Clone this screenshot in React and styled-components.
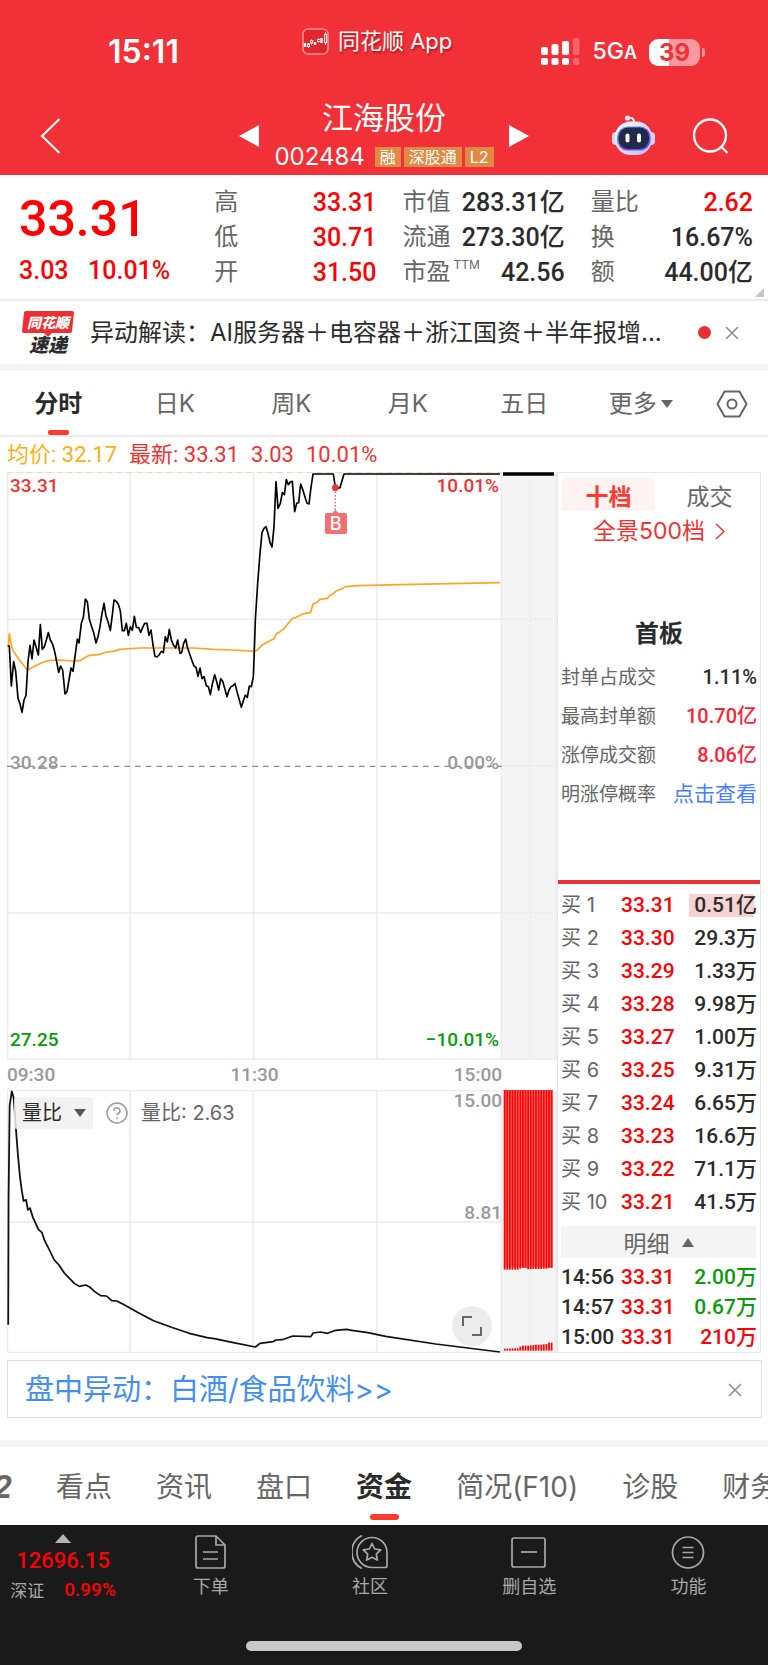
import React from "react";
import styled, { createGlobalStyle } from "styled-components";

const CJK = '"Noto Sans CJK SC", sans-serif';
const UI = `Inter, ${CJK}`;
const NUM = `Roboto, ${CJK}`;

const c = {
  brand: "#f23038",
  up: "#ff0000",
  rise: "#ee3333",
  down: "#0a9a0a",
  ink: "#2b2b2b",
  mid: "#666666",
  soft: "#999999",
  line: "#ebebeb",
  band: "#f4f4f4",
};

const Global = createGlobalStyle`
  *, *::before, *::after { box-sizing: border-box; }
  body { margin: 0; background: #fff; font-family: ${CJK}; color: ${c.ink}; }
  button { border: 0; padding: 0; margin: 0; background: none; font: inherit; color: inherit; cursor: pointer; }
  a { color: inherit; text-decoration: none; }
  h1, h2, dl, dd, dt, p { margin: 0; font-weight: inherit; font-size: inherit; }
  table { border-collapse: separate; border-spacing: 0; }
  td, th { padding: 0; font-weight: inherit; text-align: left; }
  svg { display: block; }
`;

const Page = styled.main`
  width: 100%;
  overflow: hidden;
  background: #fff;
`;

/* ---------- header ---------- */
const Header = styled.header`
  background: ${c.brand};
  color: #fff;
`;
const StatusBar = styled.div`
  display: grid;
  grid-template-columns: 194px auto 1fr;
  align-items: center;
  height: 96px;
  padding: 8px 64px 0 108px;
`;
const Clock = styled.time`
  font: 600 32px/32px ${UI};
`;
const AppName = styled.div`
  display: flex;
  align-items: center;
  gap: 9px;
  padding-bottom: 22px;
  font: 400 22px/28px ${UI};
  text-shadow: 1px 2px 2px rgba(120, 0, 0, 0.5);
  white-space: nowrap;
`;
const StatusRight = styled.div`
  display: flex;
  align-items: center;
  justify-content: flex-end;
  gap: 12px;
`;
const Network = styled.span`
  font: 500 23px/28px ${UI};
  small { font-size: 18px; font-weight: 600; }
`;
const Battery = styled.span`
  position: relative;
  width: 51px;
  margin-right: 4px;
  border-radius: 9px;
  background: linear-gradient(90deg, #fff 39%, #f9999d 39%);
  color: ${c.brand};
  font: 700 24px/27px ${UI};
  text-align: center;
  &::after {
    content: "";
    position: absolute;
    right: -5px;
    top: 9px;
    width: 3px;
    height: 9px;
    border-radius: 0 3px 3px 0;
    background: #f9999d;
  }
`;
const NavBar = styled.nav`
  display: grid;
  grid-template-columns: 1fr 290px 1fr;
  align-items: center;
  height: 79px;
  padding: 0 39px 2px 39px;
`;
const IconButton = styled.button`
  display: inline-flex;
  align-items: center;
`;
const Switcher = styled.div`
  display: flex;
  align-items: center;
  justify-content: space-between;
`;
const Stock = styled.div`
  display: flex;
  flex-direction: column;
  align-items: center;
  gap: 10px;
  padding-bottom: 8px;
`;
const StockName = styled.h1`
  font: 400 31px/40px ${CJK};
`;
const StockMeta = styled.div`
  display: flex;
  align-items: center;
  gap: 3px;
  font: 400 24px/22px ${UI};
`;
const Code = styled.span`
  margin-right: 7px;
`;
const Tag = styled.span`
  padding: 0 5px;
  background: #e08b45;
  font: 400 16px/20px ${UI};
`;
const NavActions = styled.div`
  display: flex;
  align-items: center;
  justify-content: flex-end;
  gap: 37px;
`;

/* ---------- quote ---------- */
const Quote = styled.section`
  position: relative;
  display: grid;
  grid-template-columns: minmax(0, 169fr) repeat(3, minmax(0, 162fr));
  column-gap: 26px;
  padding: 10px 15px 9px 19px;
  border-bottom: 2px solid ${c.line};
`;
const PriceBlock = styled.div`
  display: flex;
  flex-direction: column;
  color: ${c.up};
`;
const LastPrice = styled.strong`
  font: 500 50px/68px ${NUM};
`;
const Change = styled.div`
  display: flex;
  justify-content: space-between;
  padding-right: 18px;
  font: 500 25px/36px ${NUM};
`;
const Facts = styled.dl`
  display: grid;
  grid-auto-rows: 35px;
`;
const Fact = styled.div`
  display: flex;
  justify-content: space-between;
  white-space: nowrap;
  dt { color: ${c.mid}; font: 400 24px/35px ${NUM}; }
  dd { font: 500 25px/35px ${NUM}; color: ${(p) => (p.$up ? c.up : c.ink)}; }
  sup { position: absolute; margin-left: 3px; font: 400 12px/20px ${UI}; }
`;
const Corner = styled.span`
  position: absolute;
  right: 4px;
  bottom: 2px;
  border-left: 9px solid transparent;
  border-bottom: 9px solid #c4c4c4;
`;

/* ---------- news ---------- */
const News = styled.section`
  display: flex;
  align-items: center;
  height: 63px;
  padding: 0 29px 0 22px;
`;
const Logo = styled.span`
  display: flex;
  flex-direction: column;
  width: 52px;
  margin-right: 16px;
  text-align: center;
  font-style: italic;
  font-weight: 900;
`;
const LogoTop = styled.span`
  position: relative;
  z-index: 0;
  color: #fff;
  font-size: 14px;
  line-height: 22px;
  &::before {
    content: "";
    position: absolute;
    z-index: -1;
    inset: 0 1px;
    border-radius: 2px;
    background: #ea3033;
    transform: skewX(-6deg);
  }
  &::after {
    content: "";
    position: absolute;
    left: 22px;
    bottom: -4px;
    border: 4px solid transparent;
    border-bottom: 0;
    border-top-color: #ea3033;
  }
`;
const LogoBottom = styled.span`
  font-size: 19px;
  line-height: 22px;
`;
const NewsText = styled.a`
  flex: 1;
  font: 400 24px/36px ${UI};
  white-space: nowrap;
`;
const Dot = styled.span`
  width: 13px;
  height: 13px;
  margin-right: 14px;
  border-radius: 50%;
  background: #ea3033;
`;
const Band = styled.div`
  height: 7px;
  background: ${c.band};
`;

/* ---------- period tabs ---------- */
const Periods = styled.nav`
  display: grid;
  grid-template-columns: repeat(6, minmax(0, 1fr)) 69px;
  height: 66px;
  border-bottom: 2px solid ${c.line};
`;
const Period = styled.button`
  position: relative;
  display: flex;
  align-items: center;
  justify-content: center;
  gap: 4px;
  padding-top: 2px;
  font: ${(p) => (p.$active ? 700 : 400)} 24px/36px ${UI};
  color: ${(p) => (p.$active ? c.ink : c.mid)};
  &::after {
    content: "";
    display: ${(p) => (p.$active ? "block" : "none")};
    position: absolute;
    bottom: 0;
    left: calc(50% - 10px);
    width: 21px;
    height: 5px;
    border-radius: 2px;
    background: #ff3b30;
  }
`;
const Settings = styled(IconButton)`
  justify-content: flex-start;
  padding: 2px 0 0 17px;
`;
const Triangle = styled.span`
  border-style: solid;
  border-color: transparent;
  border-width: ${(p) => (p.$up ? "0" : p.$tall + "px")} ${(p) => p.$size}px ${(p) => (p.$up ? p.$tall + "px" : "0")};
  border-top-color: ${(p) => (p.$up ? "transparent" : p.$color)};
  border-bottom-color: ${(p) => (p.$up ? p.$color : "transparent")};
`;
const Readout = styled.div`
  display: flex;
  gap: 12px;
  padding: 0 7px;
  font: 400 22px/35px ${NUM};
  color: ${c.rise};
`;
const Average = styled.span`
  color: #fbb015;
`;

/* ---------- charts ---------- */
const Board = styled.section`
  display: grid;
  grid-template-columns: minmax(0, 550fr) minmax(0, 204fr);
  padding: 0 7px;
`;
const ChartColumn = styled.div`
  display: flex;
  flex-direction: column;
`;
const ChartRow = styled.div`
  display: grid;
  grid-template-columns: minmax(0, 9fr) minmax(0, 1fr);
  grid-template-rows: 100%;
  height: ${(p) => p.$height}px;
`;
const Plot = styled.div`
  position: relative;
  > svg { width: 100%; height: 100%; }
`;
const Aux = styled(Plot)`
  background: ${c.band};
`;
const ScaleLabel = styled.span`
  position: absolute;
  ${(p) => p.$side}: ${(p) => p.$inset}px;
  top: ${(p) => p.$top};
  font: 500 19px/24px ${NUM};
  color: ${(p) => p.$color};
`;
const Marker = styled.span`
  position: absolute;
  left: calc(66% - 9px);
  top: 41px;
  width: 22px;
  border-radius: 2px;
  background: #f27074;
  color: #fff;
  text-align: center;
  font: 500 18px/21px ${UI};
`;
const Times = styled.div`
  display: flex;
  justify-content: space-between;
  width: 90%;
  font: 500 19px/30px ${NUM};
  color: ${c.soft};
`;
const Indicator = styled.div`
  position: absolute;
  left: 7px;
  top: 7px;
  display: flex;
  align-items: center;
  font: 400 20px/32px ${UI};
  color: ${c.mid};
`;
const IndicatorPick = styled.button`
  display: flex;
  align-items: center;
  gap: 12px;
  height: 32px;
  padding: 0 7px 0 8px;
  margin-right: 13px;
  border-radius: 3px;
  background: rgba(240, 240, 240, 0.85);
  color: ${c.ink};
`;
const Help = styled(IconButton)`
  margin-right: 13px;
`;
const Expand = styled.button`
  position: absolute;
  right: 10px;
  bottom: 7px;
  display: flex;
  align-items: center;
  justify-content: center;
  width: 40px;
  height: 40px;
  border-radius: 50%;
  background: #ececec;
`;

/* ---------- order book ---------- */
const Book = styled.aside`
  display: flex;
  flex-direction: column;
  border: 1px solid #e6e6e6;
`;
const BookTabs = styled.div`
  display: grid;
  grid-template-columns: 1fr 1fr;
  gap: 8px;
  padding: 5px 4px 0;
`;
const BookTab = styled.button`
  height: 33px;
  border-radius: 4px;
  background: ${(p) => (p.$active ? "#fff2f2" : "none")};
  color: ${(p) => (p.$active ? "#ff3b30" : c.mid)};
  font: ${(p) => (p.$active ? 700 : 400)} 23px/32px ${CJK};
`;
const Panorama = styled.a`
  display: flex;
  align-items: center;
  justify-content: center;
  gap: 10px;
  font: 400 23px/40px ${UI};
  color: ${c.rise};
`;
const BoardTitle = styled.h2`
  padding-top: 63px;
  text-align: center;
  font: 600 24px/36px ${CJK};
`;
const Stats = styled.dl`
  display: grid;
  grid-auto-rows: 39px;
  padding: 8px 3px 0;
  margin-bottom: 66px;
`;
const Stat = styled.div`
  display: flex;
  justify-content: space-between;
  white-space: nowrap;
  dt { color: ${c.mid}; font: 400 19px/39px ${NUM}; }
  dd { font: 500 20px/39px ${NUM}; color: ${(p) => p.$color || c.ink}; }
  a { font-size: 21px; font-weight: 400; }
`;
const Bids = styled.table`
  width: 100%;
  border-top: 4px solid #ea3033;
  padding-top: 5px;
  margin-bottom: 7px;
  font: 500 21px/33px ${NUM};
`;
const Deals = styled.table`
  width: 100%;
  margin-top: 4px;
  font: 500 21px/30px ${NUM};
`;
const Level = styled.th`
  width: 63px;
  padding-left: 3px;
  color: ${(p) => (p.$dark ? c.ink : c.mid)};
  font-family: ${(p) => (p.$dark ? NUM : UI)};
  font-size: ${(p) => (p.$dark ? 21 : 20)}px;
  font-weight: ${(p) => (p.$dark ? 500 : 400)};
  white-space: nowrap;
`;
const Price = styled.td`
  color: ${c.up};
`;
const Volume = styled.td`
  padding-right: 3px;
  text-align: right;
  color: ${(p) => p.$color || c.ink};
`;
const Highlight = styled.span`
  display: inline-block;
  padding-left: 5px;
  line-height: 23px;
  background: linear-gradient(90deg, #f8d3d3 calc(100% - 3px), transparent 0);
`;
const DetailToggle = styled.button`
  display: flex;
  align-items: center;
  justify-content: center;
  gap: 12px;
  height: 32px;
  margin: 0 4px 0 3px;
  background: ${c.band};
  color: ${c.mid};
  font: 400 23px/32px ${CJK};
`;

/* ---------- lower area ---------- */
const Alert = styled.section`
  display: flex;
  align-items: center;
  justify-content: space-between;
  height: 58px;
  margin: 7px 6px 22px 7px;
  padding: 2px 19px 0 17px;
  border: 1px solid #dedede;
  a { color: #438ff0; font: 400 29px/40px ${UI}; }
`;
const Sections = styled.nav`
  display: flex;
  gap: 44px;
  height: 78px;
  margin-left: -25px;
  padding-top: 20px;
  white-space: nowrap;
`;
const SectionTab = styled.button`
  position: relative;
  flex: none;
  align-self: flex-start;
  height: 53px;
  padding-bottom: 13px;
  font: ${(p) => (p.$active ? 600 : 400)} 28px/40px ${UI};
  color: ${(p) => (p.$active ? c.ink : c.mid)};
  &::after {
    content: "";
    display: ${(p) => (p.$active ? "block" : "none")};
    position: absolute;
    bottom: 0;
    left: calc(50% - 14px);
    width: 29px;
    height: 6px;
    border-radius: 3px;
    background: #ff3b30;
  }
`;
const LevelTwo = styled(SectionTab)`
  font: italic 700 31px/40px ${UI};
`;
const Footer = styled.footer`
  background: #1a1a1a;
  color: #a8a8a8;
`;
const Actions = styled.nav`
  display: grid;
  grid-template-columns: minmax(0, 131fr) repeat(4, minmax(0, 159fr));
  height: 116px;
`;
const IndexButton = styled.button`
  display: flex;
  flex-direction: column;
  align-items: center;
  padding: 9px 5px 0 0;
`;
const IndexValue = styled.span`
  color: ${c.up};
  font: 500 22px/36px ${NUM};
`;
const IndexRow = styled.span`
  display: flex;
  gap: 20px;
  font: 400 17px/22px ${CJK};
  b { color: ${c.up}; font: 500 19px/22px ${NUM}; }
`;
const Action = styled.button`
  display: flex;
  flex-direction: column;
  align-items: center;
  gap: 3px;
  padding-top: 10px;
  font: 400 18px/26px ${CJK};
`;
const HomeBar = styled.div`
  width: 276px;
  height: 10px;
  margin: 0 auto;
  border-radius: 5px;
  background: #c8c8c8;
`;
const HomeArea = styled.div`
  height: 24px;
`;

/* ---------- drawings ---------- */
const Cross = () => (
  <svg width="14" height="14" viewBox="0 0 14 14" stroke="#8f8f8f" strokeWidth="1.6">
    <path d="M1 1L13 13M13 1L1 13" />
  </svg>
);

const AppIcon = () => (
  <svg width="27" height="27" viewBox="0 0 27 27">
    <rect x="1" y="1" width="25" height="25" rx="5" fill="#e2262d" stroke="#f58d91" strokeWidth="1.6" />
    <g fill="#fff" stroke="#fff" strokeWidth="1">
      <path d="M3 15v4M13 14v3M19.5 10v5" strokeWidth="2.4" />
      <path d="M6.500 15v5M9.500 11.500v5M16.500 10.500v4M23.500 4v13" />
      <rect x="5.500" y="16" width="2" height="2.500" fill="#e2262d" />
      <rect x="8.700" y="12.500" width="2" height="2.500" fill="#e2262d" />
      <rect x="15.600" y="11.500" width="2" height="2" fill="#e2262d" />
      <rect x="22.600" y="6.500" width="2" height="8" fill="#e2262d" />
    </g>
  </svg>
);

const Signal = () => (
  <svg width="39" height="28" viewBox="0 0 39 28" fill="#fff">
    <rect x="0" y="9" width="7" height="8" rx="2" />
    <rect x="10.500" y="6" width="7" height="11" rx="2" />
    <rect x="21" y="3" width="7" height="14" rx="2" />
    <rect x="0" y="20" width="7" height="7" rx="2" />
    <rect x="10.500" y="20" width="7" height="7" rx="2" />
    <rect x="21" y="20" width="7" height="7" rx="2" />
    <g opacity="0.25">
      <rect x="32" y="0" width="6.500" height="17" rx="2" />
      <rect x="32" y="20" width="6.500" height="7" rx="2" />
    </g>
  </svg>
);

const Robot = () => (
  <svg width="43" height="42" viewBox="0 0 43 42">
    <defs>
      <linearGradient id="shell" x1="0" y1="0" x2="1" y2="1">
        <stop offset="0" stopColor="#fff" />
        <stop offset="1" stopColor="#b9bdf0" />
      </linearGradient>
      <linearGradient id="rim" x1="0" y1="0" x2="1" y2="1">
        <stop offset="0" stopColor="#59c3ea" />
        <stop offset="0.6" stopColor="#9a3fe0" />
        <stop offset="1" stopColor="#4d62e8" />
      </linearGradient>
    </defs>
    <path d="M15 3.500C20 2 22 3 22 8" fill="none" stroke="#f4f0fb" strokeWidth="2" />
    <circle cx="15.500" cy="3" r="2.600" fill="#f4e9f6" />
    <rect x="0" y="17" width="8" height="13" rx="4" fill="#d5d8f5" />
    <rect x="35" y="17" width="8" height="13" rx="4" fill="#d5d8f5" />
    <rect x="3" y="6.500" width="37" height="33.500" rx="15.500" fill="url(#shell)" />
    <rect x="5" y="11.500" width="33.500" height="24" rx="10.500" fill="url(#rim)" />
    <rect x="6.500" y="12.500" width="30.500" height="21.500" rx="9.500" fill="#1f2a4d" />
    <rect x="13.500" y="18.500" width="4" height="9" rx="2" fill="#fff" />
    <rect x="25" y="18.500" width="4" height="9" rx="2" fill="#fff" />
  </svg>
);

const PRICE =
  "23,558 28,558 34,678 41,605 47,633 54,715 60,732 66,757 72,720 78,706 84,605 90,556 96,597 102,540 108,560 115,585 121,494 127,568 133,560 139,540 145,518 151,540 158,553 164,575 170,605 176,637 182,618 188,630 195,702 201,695 207,660 213,624 219,634 225,590 232,537 237,549 244,490 250,472 256,417 262,425 268,478 275,500 281,518 288,549 294,530 300,500 306,460 312,430 318,468 324,485 331,511 337,465 342,420 348,423 355,433 361,453 367,512 373,512 379,490 385,526 391,500 397,511 403,469 409,502 416,503 422,517 428,502 434,490 441,490 447,526 453,510 459,555 465,589 471,591 477,585 484,574 490,578 496,530 502,546 508,508 514,540 520,555 527,564 533,540 540,580 545,578 551,550 557,537 563,565 570,585 576,602 582,618 588,622 594,649 600,624 606,656 612,650 619,677 625,680 631,704 637,672 644,644 650,665 656,690 662,656 668,664 674,685 681,710 687,690 693,680 699,677 705,671 711,695 718,720 724,742 730,722 736,705 742,712 748,678 754,680 760,650 762,600 766,480 773,370 780,280 786,218 792,205 798,200 804,220 810,248 816,261 822,200 828,65 834,145 841,130 847,98 853,104 859,59 865,74 871,66 877,64 884,155 890,130 896,128 902,72 908,88 914,108 921,130 927,132 932,90 939,42 1000,42 1006,82 1012,85 1020,83 1026,62 1032,42 1500,42";
const AVERAGE =
  "25,560 28,521 34,555 40,574 60,602 82,630 95,623 130,606 150,601 180,600 215,603 240,602 265,587 300,583 320,576 340,574 360,568 420,564 580,564 640,568 700,570 765,574 772,570 785,556 810,542 822,536 830,521 840,515 852,506 876,476 890,471 910,461 932,457 939,432 950,428 960,418 982,415 990,406 1000,401 1008,393 1025,387 1035,380 1075,377 1200,374 1500,368";
const RATIO =
  "23,882 24,500 27,225 33,182 38,200 41,240 45,300 50,370 56,440 61,480 66,511 73,507 78,538 84,532 92,560 108,597 117,605 125,630 137,655 152,688 165,703 180,727 208,758 222,767 240,763 250,768 265,783 282,795 298,796 313,810 327,811 345,821 385,845 430,870 480,890 530,908 580,921 600,924 650,935 715,949 728,938 765,933 773,928 790,927 820,916 870,918 877,907 897,904 917,908 940,899 970,896 990,900 1030,906 1080,917 1220,940 1400,964";

const PriceChart = () => (
  <svg viewBox="21 36 1485 1764" preserveAspectRatio="none" fill="none" aria-label="分时">
    <g stroke={c.line} strokeWidth="4.500">
      <path d="M23 36V1800M390 36V1800M760 36V1800M1131 36V1800M1504 36V1800M21 478H1506M21 1359H1506M21 1797H1506" />
    </g>
    <path d="M21 38H1506" stroke={c.line} strokeWidth="3" />
    <path d="M21 36H1506" stroke="#f0d6a8" strokeWidth="6" strokeDasharray="15 15" />
    <path d="M21 919H1506" stroke="#8c8c8c" strokeWidth="3.500" strokeDasharray="17 15" />
    <polyline points={AVERAGE} stroke="#ffa526" strokeWidth="5" strokeLinejoin="round" />
    <polyline points={PRICE} stroke="#000" strokeWidth="5" strokeLinejoin="round" />
    <circle cx="1006" cy="83" r="10" fill="#e8383d" />
    <path d="M1006 95V150" stroke="#f0666a" strokeWidth="4" strokeDasharray="5 5" />
    <path d="M996 160L1006 150L1016 160Z" fill="#f27074" />
  </svg>
);

const AuxPrice = () => (
  <svg viewBox="0 0 55 588" preserveAspectRatio="none" fill="none">
    <path d="M28 4V588M0 147H55M0 441H55" stroke="#e6e6e6" strokeDasharray="2 2" />
    <path d="M0 294H55M54 0V588M0 587H55" stroke="#ebebeb" />
    <path d="M1 2H52" stroke="#000" strokeWidth="3.500" />
  </svg>
);

const RatioChart = () => (
  <svg viewBox="19.600 178 1386 789" preserveAspectRatio="none" fill="none">
    <path d="M21 178V967M364 178V967M709 178V967M1055 178V967M1404 178V967" stroke={c.line} strokeWidth="4" />
    <path d="M20 180H1406M20 574H1406M20 965H1406" stroke={c.line} strokeWidth="4" />
    <polyline points={RATIO} stroke="#111" strokeWidth="5" strokeLinejoin="round" />
  </svg>
);

const barTops = [539, 539, 539, 539, 539, 539, 536, 533, 534, 538, 538, 537, 537, 537, 537, 536, 536, 534, 533];
const barFoots = [6, 6, 6, 7, 7, 7, 12, 15, 15, 15, 16, 17, 18, 18, 18, 19, 20, 24, 24];
const Bars = () => (
  <svg viewBox="1406 178 154 789" preserveAspectRatio="none" fill="#ff0505">
    <path d="M1484 178V967" stroke="#e6e6e6" strokeWidth="3" strokeDasharray="6 6" />
    <path d="M1406 965H1560M1558 178V967" stroke={c.line} strokeWidth="4" />
    <rect x="1411" y="178" width="137" height="533" fill="#ff8080" />
    {barTops.map((h, i) => (
      <g key={i}>
        <rect x={1411 + i * 7.3} y="178" width="5" height={h} />
        <rect x={1411 + i * 7.3} y={960 - barFoots[i]} width="5" height={barFoots[i]} />
      </g>
    ))}
  </svg>
);

const OrderIcon = () => (
  <svg width="36" height="34" viewBox="0 0 36 34" fill="none" stroke="#a8a8a8" strokeWidth="1.700">
    <path d="M5 1H23L32 10V31a2 2 0 0 1-2 2H5a2 2 0 0 1-2-2V3a2 2 0 0 1 2-2ZM23 1V10H32M10 17H25M10 24H25" />
  </svg>
);
const CommunityIcon = () => (
  <svg width="36" height="34" viewBox="0 0 36 34" fill="none" stroke="#a8a8a8" strokeWidth="1.700">
    <path d="M20 2.500a15 15 0 1 0 0 30H33a2 2 0 0 0 2-2V17.500a15 15 0 0 0-15-15Z" />
    <path d="M10 0.500A18.500 18.500 0 0 0 10 33.500" />
    <path d="M20 8.500l2.700 5.500 6 .9-4.400 4.200 1 6-5.300-2.800-5.300 2.800 1-6-4.400-4.200 6-.9Z" strokeLinejoin="round" />
  </svg>
);
const RemoveIcon = () => (
  <svg width="36" height="34" viewBox="0 0 36 34" fill="none" stroke="#a8a8a8" strokeWidth="1.700">
    <rect x="1" y="3" width="33" height="29" rx="2" />
    <path d="M10 17H26" />
  </svg>
);
const MenuIcon = () => (
  <svg width="36" height="34" viewBox="0 0 36 34" fill="none" stroke="#a8a8a8" strokeWidth="1.700">
    <circle cx="18" cy="17.500" r="15.500" />
    <path d="M12.500 12.500H23.500M12.500 17.500H23.500M12.500 22.500H23.500" />
  </svg>
);

/* ---------- data ---------- */
const facts = [
  [["高", "33.31", true], ["低", "30.71", true], ["开", "31.50", true]],
  [["市值", "283.31亿"], ["流通", "273.30亿"], ["市盈", "42.56", false, "TTM"]],
  [["量比", "2.62", true], ["换", "16.67%"], ["额", "44.00亿"]],
];
const stats = [
  ["封单占成交", "1.11%"],
  ["最高封单额", "10.70亿", "#ff2436"],
  ["涨停成交额", "8.06亿", "#ff2436"],
];
const bids = [
  ["33.31", "0.51亿"], ["33.30", "29.3万"], ["33.29", "1.33万"], ["33.28", "9.98万"], ["33.27", "1.00万"],
  ["33.25", "9.31万"], ["33.24", "6.65万"], ["33.23", "16.6万"], ["33.22", "71.1万"], ["33.21", "41.5万"],
];
const deals = [
  ["14:56", "33.31", "2.00万", c.down],
  ["14:57", "33.31", "0.67万", c.down],
  ["15:00", "33.31", "210万", c.up],
];
const sections = ["看点", "资讯", "盘口", "资金", "简况(F10)", "诊股", "财务"];
const actions = [
  ["下单", OrderIcon], ["社区", CommunityIcon], ["删自选", RemoveIcon], ["功能", MenuIcon],
];

export default function App() {
  return (
    <Page>
      <Global />
      <Header>
        <StatusBar>
          <Clock>15:11</Clock>
          <AppName><AppIcon />同花顺 App</AppName>
          <StatusRight>
            <Signal />
            <Network>5G<small>A</small></Network>
            <Battery>39</Battery>
          </StatusRight>
        </StatusBar>
        <NavBar>
          <IconButton aria-label="返回">
            <svg width="22" height="36" viewBox="0 0 22 36" fill="none" stroke="#fff" strokeWidth="2">
              <path d="M20.500 1L3 18L20.500 35" />
            </svg>
          </IconButton>
          <Switcher>
            <IconButton aria-label="上一只">
              <svg width="20" height="22" viewBox="0 0 20 22" fill="#fff"><path d="M20 0V22L0 11Z" /></svg>
            </IconButton>
            <Stock>
              <StockName>江海股份</StockName>
              <StockMeta>
                <Code>002484</Code>
                <Tag>融</Tag>
                <Tag>深股通</Tag>
                <Tag>L2</Tag>
              </StockMeta>
            </Stock>
            <IconButton aria-label="下一只">
              <svg width="20" height="22" viewBox="0 0 20 22" fill="#fff"><path d="M0 0V22L20 11Z" /></svg>
            </IconButton>
          </Switcher>
          <NavActions>
            <IconButton aria-label="助手"><Robot /></IconButton>
            <IconButton aria-label="搜索">
              <svg width="37" height="36" viewBox="0 0 37 36" fill="none" stroke="#fff" strokeWidth="2.300">
                <circle cx="18" cy="17.500" r="16" />
                <path d="M28.500 28L35.500 35" />
              </svg>
            </IconButton>
          </NavActions>
        </NavBar>
      </Header>

      <Quote>
        <PriceBlock>
          <LastPrice>33.31</LastPrice>
          <Change><span>3.03</span><span>10.01%</span></Change>
        </PriceBlock>
        {facts.map((col, i) => (
          <Facts key={i}>
            {col.map(([label, value, up, note]) => (
              <Fact key={label} $up={up}>
                <dt>{label}{note && <sup>{note}</sup>}</dt>
                <dd>{value}</dd>
              </Fact>
            ))}
          </Facts>
        ))}
        <Corner />
      </Quote>

      <News>
        <Logo><LogoTop>同花顺</LogoTop><LogoBottom>速递</LogoBottom></Logo>
        <NewsText href="#news">异动解读：AI服务器＋电容器＋浙江国资＋半年报增...</NewsText>
        <Dot />
        <IconButton aria-label="关闭"><Cross /></IconButton>
      </News>
      <Band />

      <Periods>
        <Period $active>分时</Period>
        <Period>日K</Period>
        <Period>周K</Period>
        <Period>月K</Period>
        <Period>五日</Period>
        <Period>更多<Triangle $size={6} $tall={8} $color="#666" /></Period>
        <Settings aria-label="设置">
          <svg width="32" height="28" viewBox="0 0 32 28" fill="none" stroke="#666" strokeWidth="2">
            <path d="M8.500 1.500H23.500L30.500 14L23.500 26.500H8.500L1.500 14Z" strokeLinejoin="round" />
            <circle cx="16" cy="14" r="4.500" />
          </svg>
        </Settings>
      </Periods>

      <Readout>
        <Average>均价: 32.17</Average>
        <span>最新: 33.31</span>
        <span>3.03</span>
        <span>10.01%</span>
      </Readout>

      <Board>
        <ChartColumn>
          <ChartRow $height={588}>
            <Plot>
              <PriceChart />
              <ScaleLabel $side="left" $inset={3} $top="2px" $color={c.rise}>33.31</ScaleLabel>
              <ScaleLabel $side="right" $inset={3} $top="2px" $color={c.rise}>10.01%</ScaleLabel>
              <ScaleLabel $side="left" $inset={3} $top="calc(50% - 15px)" $color={c.soft}>30.28</ScaleLabel>
              <ScaleLabel $side="right" $inset={3} $top="calc(50% - 15px)" $color={c.soft}>0.00%</ScaleLabel>
              <ScaleLabel $side="left" $inset={3} $top="calc(100% - 32px)" $color={c.down}>27.25</ScaleLabel>
              <ScaleLabel $side="right" $inset={3} $top="calc(100% - 32px)" $color={c.down}>−10.01%</ScaleLabel>
              <Marker>B</Marker>
            </Plot>
            <Aux><AuxPrice /></Aux>
          </ChartRow>
          <Times><span>09:30</span><span>11:30</span><span>15:00</span></Times>
          <ChartRow $height={263}>
            <Plot>
              <RatioChart />
              <Indicator>
                <IndicatorPick>量比<Triangle $size={6} $tall={8} $color="#555" /></IndicatorPick>
                <Help aria-label="说明">
                  <svg width="22" height="22" viewBox="0 0 22 22" fill="none" stroke="#999" strokeWidth="1.500">
                    <circle cx="11" cy="11" r="10" />
                    <path d="M8 8.800a3 3 0 1 1 4.200 2.700c-.8.400-1.200.8-1.200 1.900" />
                    <path d="M11 15v1.700" />
                  </svg>
                </Help>
                <span>量比: 2.63</span>
              </Indicator>
              <ScaleLabel $side="right" $inset={0} $top="-1px" $color={c.soft}>15.00</ScaleLabel>
              <ScaleLabel $side="right" $inset={0} $top="calc(50% - 21px)" $color={c.soft}>8.81</ScaleLabel>
              <Expand aria-label="全屏">
                <svg width="20" height="20" viewBox="0 0 20 20" fill="none" stroke="#666" strokeWidth="2">
                  <path d="M1 10V1H10M19 11V19H10" />
                </svg>
              </Expand>
            </Plot>
            <Aux><Bars /></Aux>
          </ChartRow>
        </ChartColumn>

        <Book>
          <BookTabs>
            <BookTab $active>十档</BookTab>
            <BookTab>成交</BookTab>
          </BookTabs>
          <Panorama href="#depth">
            全景500档
            <svg width="10" height="17" viewBox="0 0 10 17" fill="none" stroke={c.rise} strokeWidth="1.500">
              <path d="M1 1L9 8.500L1 16" />
            </svg>
          </Panorama>
          <BoardTitle>首板</BoardTitle>
          <Stats>
            {stats.map(([k, v, color]) => (
              <Stat key={k} $color={color}><dt>{k}</dt><dd>{v}</dd></Stat>
            ))}
            <Stat $color="#4a7dff"><dt>明涨停概率</dt><dd><a href="#odds">点击查看</a></dd></Stat>
          </Stats>
          <Bids>
            <tbody>
              {bids.map(([price, volume], i) => (
                <tr key={price}>
                  <Level scope="row">买 {i + 1}</Level>
                  <Price>{price}</Price>
                  <Volume>{i === 0 ? <Highlight>{volume}</Highlight> : volume}</Volume>
                </tr>
              ))}
            </tbody>
          </Bids>
          <DetailToggle>明细<Triangle $up $size={6} $tall={9} $color="#666" /></DetailToggle>
          <Deals>
            <tbody>
              {deals.map(([time, price, volume, color]) => (
                <tr key={time}>
                  <Level scope="row" $dark>{time}</Level>
                  <Price>{price}</Price>
                  <Volume $color={color}>{volume}</Volume>
                </tr>
              ))}
            </tbody>
          </Deals>
        </Book>
      </Board>

      <Alert>
        <a href="#alert">盘中异动：白酒/食品饮料&gt;&gt;</a>
        <IconButton aria-label="关闭"><Cross /></IconButton>
      </Alert>
      <Band />

      <Sections>
        <LevelTwo>L2</LevelTwo>
        {sections.map((s) => (
          <SectionTab key={s} $active={s === "资金"}>{s}</SectionTab>
        ))}
      </Sections>

      <Footer>
        <Actions>
          <IndexButton>
            <Triangle $up $size={8} $tall={9} $color="#b5b5b5" />
            <IndexValue>12696.15</IndexValue>
            <IndexRow>深证<b>0.99%</b></IndexRow>
          </IndexButton>
          {actions.map(([label, Icon]) => (
            <Action key={label}><Icon />{label}</Action>
          ))}
        </Actions>
        <HomeArea><HomeBar /></HomeArea>
      </Footer>
    </Page>
  );
}
